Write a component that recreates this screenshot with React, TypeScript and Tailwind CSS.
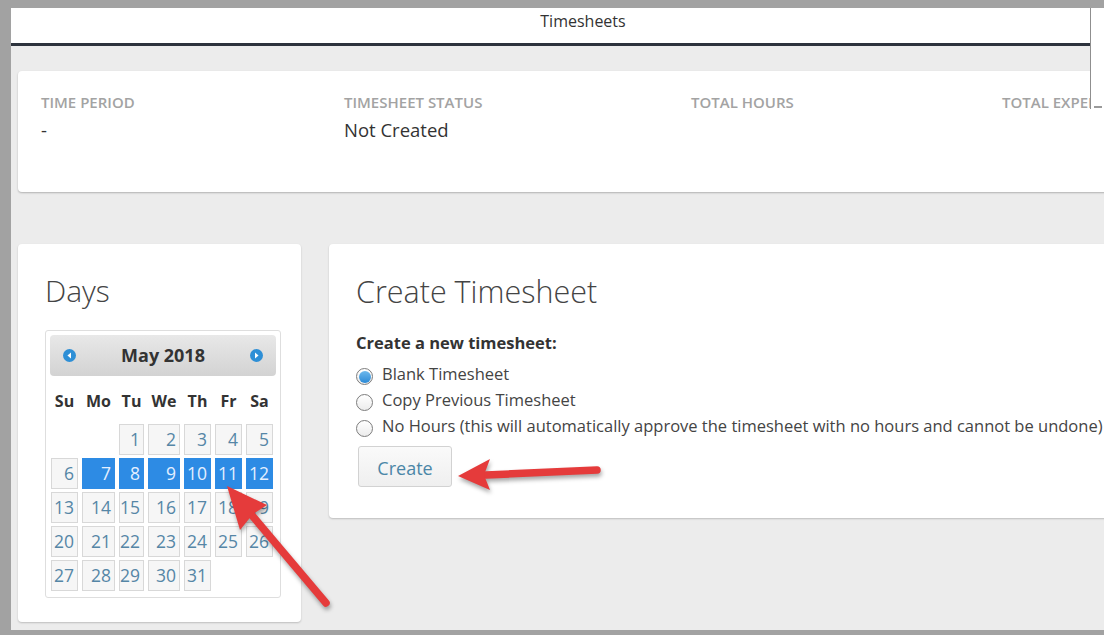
import { FC } from "react";

// May 2018 starts on a Tuesday
const weeks: (number | null)[][] = [
  [null, null, 1, 2, 3, 4, 5],
  [6, 7, 8, 9, 10, 11, 12],
  [13, 14, 15, 16, 17, 18, 19],
  [20, 21, 22, 23, 24, 25, 26],
  [27, 28, 29, 30, 31, null, null],
];
const selected = [7, 8, 9, 10, 11, 12];
const dayNames = ["Su", "Mo", "Tu", "We", "Th", "Fr", "Sa"];

const NavIcon: FC<{ dir: "prev" | "next" }> = ({ dir }) => (
  <svg width="13" height="13" viewBox="0 0 14 14">
    <circle cx="7" cy="7" r="7" fill="#2e8fd6" />
    {dir === "prev" ? (
      <path d="M8.6 3.8 L4.8 7 L8.6 10.2 Z" fill="#fff" />
    ) : (
      <path d="M5.4 3.8 L9.2 7 L5.4 10.2 Z" fill="#fff" />
    )}
  </svg>
);

const Radio: FC<{ checked?: boolean }> = ({ checked }) => (
  <span className="mt-[7px] w-[17px] h-[17px] shrink-0 rounded-full border border-[#7d7d7d] bg-gradient-to-b from-white to-[#ececec] flex items-center justify-center">
    {checked && (
      <span className="w-[12px] h-[12px] rounded-full bg-gradient-to-b from-[#6cb8ec] to-[#2a8ad6]" />
    )}
  </span>
);

const Calendar: FC = () => (
  <div className="w-[236px] h-[268px] border border-[#dedede] rounded-[3px] p-[4px]">
    <div className="h-[41px] rounded-[4px] bg-gradient-to-b from-[#e8e8e8] to-[#d3d3d3] flex items-center justify-between px-[13px]">
      <NavIcon dir="prev" />
      <span className="text-[18px] font-bold text-[#333]">May 2018</span>
      <NavIcon dir="next" />
    </div>
    <div className="ml-[1px] mt-[10px] grid grid-cols-[27px_33px_25px_32px_27px_27px_27px] gap-x-[4px] h-[30px] items-center">
      {dayNames.map((d) => (
        <span key={d} className="text-center text-[16px] font-bold text-[#333]">
          {d}
        </span>
      ))}
    </div>
    <div className="ml-[1px] mt-[8px] grid grid-cols-[27px_33px_25px_32px_27px_27px_27px] gap-x-[4px] gap-y-[3px]">
      {weeks.flat().map((d, i) =>
        d === null ? (
          <span key={i} className="h-[31px]" />
        ) : (
          <span
            key={i}
            className={
              selected.includes(d)
                ? "h-[31px] flex items-center justify-end pr-[3px] text-[17.5px] bg-[#2d8be4] border border-[#2d8be4] text-[#e4efff]"
                : "h-[31px] flex items-center justify-end pr-[3px] text-[17.5px] bg-[#f6f6f6] border border-[#d8d8d8] text-[#5586a6]"
            }
          >
            {d}
          </span>
        )
      )}
    </div>
  </div>
);

const Arrows: FC = () => (
  <svg
    className="absolute left-0 top-0 pointer-events-none drop-shadow-[1px_3px_2px_rgba(0,0,0,0.35)]"
    width="1104"
    height="635"
  >
    {/* arrow to the 11th */}
    <line x1="326" y1="603" x2="250" y2="513" stroke="#e53b3b" strokeWidth="7.5" strokeLinecap="round" />
    <polygon points="227,486 267,505 253,514 240,530" fill="#e53b3b" />
    {/* arrow to the Create button */}
    <line x1="597" y1="470" x2="486" y2="475" stroke="#e53b3b" strokeWidth="7.5" strokeLinecap="round" />
    <polygon points="458,476 490,459 484,475 490,490" fill="#e53b3b" />
  </svg>
);

const App: FC = () => {
  return (
    <div className="relative w-[1104px] h-[635px] overflow-hidden bg-[#a2a2a2] pt-[8px] pl-[11px] pb-[5px] font-['Open_Sans',sans-serif]">
      <div className="h-full bg-[#ececec] overflow-hidden">
        <div className="w-[1144px]">
          <div className="h-[35px] bg-white pt-[3px] text-center text-[16px] leading-[20px] text-[#333]">
            Timesheets
          </div>
          <div className="h-[3px] bg-[#2d333d]" />

          <div className="pl-[7px] pt-[25px]">
            {/* summary */}
            <div className="w-[1126px] h-[121px] bg-white rounded-[4px] shadow-[0_1px_2px_rgba(0,0,0,0.25)] pl-[23px] pt-[21px] flex">
              <div className="w-[303px]">
                <div className="text-[15px] leading-[20px] font-semibold text-[#a3a3a3]">TIME PERIOD</div>
                <div className="mt-[4px] text-[18.5px] leading-[28px] text-[#333]">-</div>
              </div>
              <div className="w-[347px]">
                <div className="text-[15px] leading-[20px] font-semibold text-[#a3a3a3]">TIMESHEET STATUS</div>
                <div className="mt-[4px] text-[18.5px] leading-[28px] text-[#333]">Not Created</div>
              </div>
              <div className="w-[311px]">
                <div className="text-[15px] leading-[20px] font-semibold text-[#a3a3a3]">TOTAL HOURS</div>
              </div>
              <div>
                <div className="text-[15px] leading-[20px] font-semibold text-[#a3a3a3]">TOTAL EXPENSES</div>
              </div>
            </div>

            <div className="mt-[52px] flex items-start gap-[28px]">
              {/* days */}
              <div className="w-[283px] h-[378px] bg-white rounded-[4px] shadow-[0_1px_2px_rgba(0,0,0,0.2)] pl-[27px] pt-[29px]">
                <h2 className="text-[30px] leading-[36px] font-light text-[#444]">Days</h2>
                <div className="mt-[21px]">
                  <Calendar />
                </div>
              </div>

              {/* create */}
              <div className="w-[800px] h-[274px] bg-white rounded-[4px] shadow-[0_1px_2px_rgba(0,0,0,0.2)] pl-[27px] pt-[29px]">
                <h2 className="text-[30.5px] leading-[36px] font-light text-[#444]">Create Timesheet</h2>
                <div className="mt-[23px] text-[16.5px] leading-[22px] font-bold text-[#333]">Create a new timesheet:</div>
                <div className="mt-[7px] flex flex-col text-[16.5px] leading-[26px] text-[#444]">
                  <label className="flex items-start gap-[9px]">
                    <Radio checked />
                    <span>Blank Timesheet</span>
                  </label>
                  <label className="flex items-start gap-[9px]">
                    <Radio />
                    <span>Copy Previous Timesheet</span>
                  </label>
                  <label className="flex items-start gap-[9px]">
                    <Radio />
                    <span>No Hours (this will automatically approve the timesheet with no hours and cannot be undone)</span>
                  </label>
                </div>
                <button className="mt-[7px] ml-[2px] w-[94px] h-[41px] rounded-[3px] border border-[#d2d2d2] bg-gradient-to-b from-[#fafafa] to-[#efefef] text-[18px] leading-[24px] pt-[2px] text-[#4b86a7]">
                  Create
                </button>
              </div>
            </div>
          </div>
        </div>
      </div>

      {/* dropdown edge over the right side */}
      <div className="absolute left-[1090px] top-[8px] w-[14px] h-[101px] bg-white border-l border-[#8f8f8f]">
        <div className="absolute bottom-[1px] left-[3px] w-[8px] h-[2px] bg-[#9a9a9a]" />
      </div>

      <Arrows />
    </div>
  );
};

export default App;
